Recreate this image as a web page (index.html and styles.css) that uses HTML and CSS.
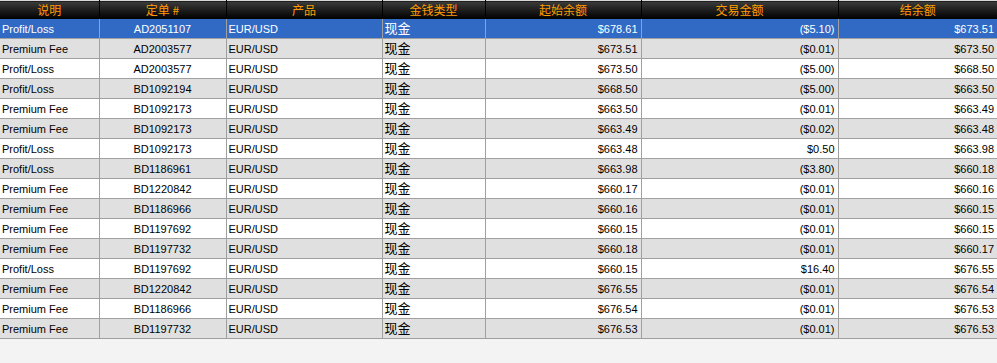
FILE: index.html
```html
<!DOCTYPE html>
<html lang="zh">
<head>
    <meta charset="UTF-8">
    <title>账户明细</title>
    <link rel="stylesheet" href="styles.css">
</head>
<body>
    <table class="ledger">
        <colgroup>
            <col class="c-desc">
            <col class="c-order">
            <col class="c-prod">
            <col class="c-type">
            <col class="c-open">
            <col class="c-amt">
            <col class="c-close">
        </colgroup>
        <thead>
            <tr>
                <th>说明</th>
                <th>定单 #</th>
                <th>产品</th>
                <th>金钱类型</th>
                <th>起始余额</th>
                <th>交易金额</th>
                <th>结余额</th>
            </tr>
        </thead>
        <tbody>
            <tr class="selected"><td>Profit/Loss</td><td class="mid">AD2051107</td><td>EUR/USD</td><td class="cn">现金</td><td class="num">$678.61</td><td class="num">($5.10)</td><td class="num">$673.51</td></tr>
            <tr><td>Premium Fee</td><td class="mid">AD2003577</td><td>EUR/USD</td><td class="cn">现金</td><td class="num">$673.51</td><td class="num">($0.01)</td><td class="num">$673.50</td></tr>
            <tr><td>Profit/Loss</td><td class="mid">AD2003577</td><td>EUR/USD</td><td class="cn">现金</td><td class="num">$673.50</td><td class="num">($5.00)</td><td class="num">$668.50</td></tr>
            <tr><td>Profit/Loss</td><td class="mid">BD1092194</td><td>EUR/USD</td><td class="cn">现金</td><td class="num">$668.50</td><td class="num">($5.00)</td><td class="num">$663.50</td></tr>
            <tr><td>Premium Fee</td><td class="mid">BD1092173</td><td>EUR/USD</td><td class="cn">现金</td><td class="num">$663.50</td><td class="num">($0.01)</td><td class="num">$663.49</td></tr>
            <tr><td>Premium Fee</td><td class="mid">BD1092173</td><td>EUR/USD</td><td class="cn">现金</td><td class="num">$663.49</td><td class="num">($0.02)</td><td class="num">$663.48</td></tr>
            <tr><td>Profit/Loss</td><td class="mid">BD1092173</td><td>EUR/USD</td><td class="cn">现金</td><td class="num">$663.48</td><td class="num">$0.50</td><td class="num">$663.98</td></tr>
            <tr><td>Profit/Loss</td><td class="mid">BD1186961</td><td>EUR/USD</td><td class="cn">现金</td><td class="num">$663.98</td><td class="num">($3.80)</td><td class="num">$660.18</td></tr>
            <tr><td>Premium Fee</td><td class="mid">BD1220842</td><td>EUR/USD</td><td class="cn">现金</td><td class="num">$660.17</td><td class="num">($0.01)</td><td class="num">$660.16</td></tr>
            <tr><td>Premium Fee</td><td class="mid">BD1186966</td><td>EUR/USD</td><td class="cn">现金</td><td class="num">$660.16</td><td class="num">($0.01)</td><td class="num">$660.15</td></tr>
            <tr><td>Premium Fee</td><td class="mid">BD1197692</td><td>EUR/USD</td><td class="cn">现金</td><td class="num">$660.15</td><td class="num">($0.01)</td><td class="num">$660.15</td></tr>
            <tr><td>Premium Fee</td><td class="mid">BD1197732</td><td>EUR/USD</td><td class="cn">现金</td><td class="num">$660.18</td><td class="num">($0.01)</td><td class="num">$660.17</td></tr>
            <tr><td>Profit/Loss</td><td class="mid">BD1197692</td><td>EUR/USD</td><td class="cn">现金</td><td class="num">$660.15</td><td class="num">$16.40</td><td class="num">$676.55</td></tr>
            <tr><td>Premium Fee</td><td class="mid">BD1220842</td><td>EUR/USD</td><td class="cn">现金</td><td class="num">$676.55</td><td class="num">($0.01)</td><td class="num">$676.54</td></tr>
            <tr><td>Premium Fee</td><td class="mid">BD1186966</td><td>EUR/USD</td><td class="cn">现金</td><td class="num">$676.54</td><td class="num">($0.01)</td><td class="num">$676.53</td></tr>
            <tr><td>Premium Fee</td><td class="mid">BD1197732</td><td>EUR/USD</td><td class="cn">现金</td><td class="num">$676.53</td><td class="num">($0.01)</td><td class="num">$676.53</td></tr>
        </tbody>
    </table>
</body>
</html>
```

FILE: styles.css
```css
body {
    margin: 0;
    padding: 0;
    background-color: #f3f3f3;
    font-family: 'Liberation Sans', sans-serif;
    font-size: 11px;
    color: #000;
}

.ledger {
    width: 997px;
    table-layout: fixed;
    border-collapse: collapse;
}

.c-desc { width: 99px; }
.c-order { width: 127px; }
.c-prod { width: 156px; }
.c-type { width: 103px; }
.c-open { width: 156px; }
.c-amt { width: 197px; }
.c-close { width: 159px; }

.ledger th {
    height: 18px;
    padding: 0;
    border-top: 1px solid #d8d8d8;
    border-right: 1px solid #000;
    background: linear-gradient(#3c3c3c, #1c1c1c 50%, #000);
    color: #ff9c00;
    font-family: 'Noto Sans CJK SC', sans-serif;
    font-weight: normal;
    font-size: 12px;
    line-height: 18px;
    text-align: center;
}

.ledger td {
    padding: 1px 2px 0;
    border-right: 1px solid #a0a0a0;
    border-bottom: 1px solid #a0a0a0;
    white-space: nowrap;
    overflow: hidden;
    line-height: 18px;
    vertical-align: middle;
}

.ledger td:last-child,
.ledger th:last-child {
    border-right: none;
}

.ledger tbody tr {
    background-color: #fff;
}

.ledger tbody tr:nth-child(even) {
    background-color: #e0e0e0;
}

.ledger tbody tr.selected {
    background-color: #316ac5;
    color: #fff;
}

.ledger td.mid {
    text-align: center;
}

.ledger td.num {
    text-align: right;
    padding-right: 3px;
}

.ledger td.cn {
    padding-top: 0;
    padding-bottom: 2px;
    font-family: 'Noto Sans CJK SC', sans-serif;
    font-size: 13px;
    line-height: 17px;
}
```
